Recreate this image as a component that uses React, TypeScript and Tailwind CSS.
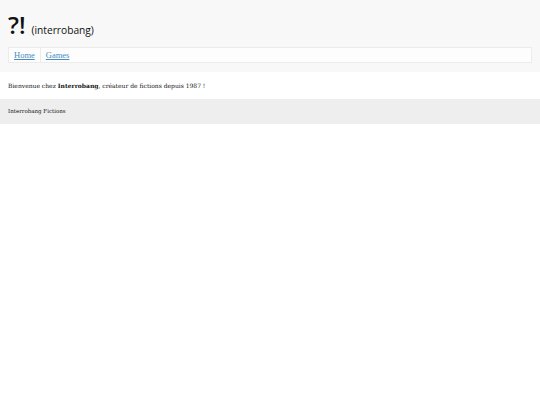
export default function App() {
  return (
    <div className="min-h-[405px] bg-white">
      <header className="bg-[#f8f8f8] px-2 pt-[13px] pb-[9px]">
        <h1 className="flex items-baseline gap-[6px] h-[30px] font-['Open_Sans',sans-serif] text-[#111]">
          <span className="text-[24px] font-semibold leading-none">?!</span>
          <span className="text-[10.2px] leading-none">(interrobang)</span>
        </h1>
        <nav className="mt-[4px] flex h-[16px] items-center border border-[#ececec] bg-[#fdfdfd] font-['Liberation_Serif',serif] text-[8.5px]">
          <a href="#" className="px-[5px] text-[#4a8dc4] underline border-r border-[#ececec] h-full flex items-center">Home</a>
          <a href="#" className="px-[5px] text-[#4a8dc4] underline h-full flex items-center">Games</a>
        </nav>
      </header>
      <main className="px-2 h-[27px] flex items-center font-['DejaVu_Serif',serif] text-[6px] text-[#111]">
        <p>Bienvenue chez <strong>Interrobang</strong>, créateur de fictions depuis 1987 !</p>
      </main>
      <footer className="bg-[#eeeeee] h-[25px] px-2 flex items-center font-['DejaVu_Serif',serif] text-[5.5px] text-[#111]">
        Interrobang Fictions
      </footer>
    </div>
  );
}
